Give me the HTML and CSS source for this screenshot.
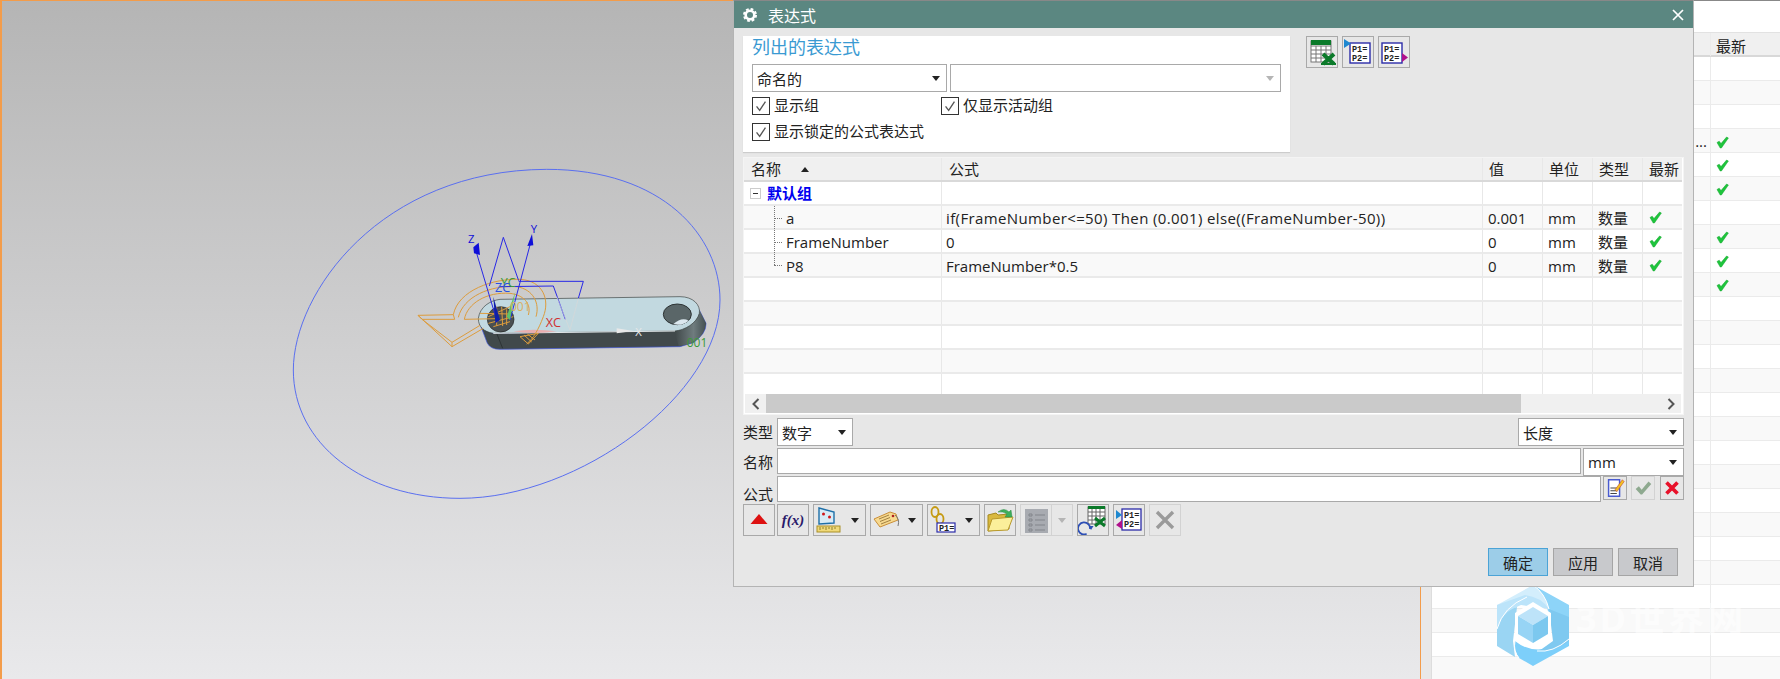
FILE: index.html
```html
<!DOCTYPE html>
<html lang="zh">
<head>
<meta charset="utf-8">
<title>表达式</title>
<link rel="stylesheet" href="styles.css">
</head>
<body>
<svg class="defs" width="0" height="0" aria-hidden="true">
  <symbol id="i-check" viewBox="0 0 13 13"><path d="M1 6.5 L3.2 5.2 L5 7.6 L10.6 1 L12.4 2 L5.4 12 L4.2 12 Z" fill="#1ec53c" stroke="#12a52c" stroke-width=".5"/></symbol>
  <symbol id="i-box" viewBox="0 0 18 18"><path d="M4 9.5 L7.5 14 L14 4" fill="none" stroke="#555" stroke-width="1.500"/></symbol>
  <symbol id="i-grid" viewBox="0 0 30 30">
    <rect x="4" y="4" width="20" height="21" fill="#fff" stroke="#777"/>
    <path d="M4 9H24M4 13H24M4 17H24M4 21H24M9 9V25M14 9V25M19 9V25" stroke="#777" fill="none"/>
    <rect x="4" y="3" width="20" height="5" fill="#0b7a2a"/>
    <path d="M16 17 L27 27 M27 17 L16 27" stroke="#0b7a2a" stroke-width="4"/>
    <path d="M14 27H29" stroke="#0b7a2a" stroke-width="2"/>
  </symbol>
  <symbol id="i-tbl2" viewBox="0 0 30 30">
    <rect x="10" y="2" width="17" height="17" fill="#fff" stroke="#666"/>
    <path d="M10 7H27M10 11H27M10 15H27M14 3V19M18 3V19M22 3V19" stroke="#666"/>
    <rect x="10" y="1" width="17" height="3" fill="#0b7a2a"/>
    <path d="M17 13 L27 21 M27 13 L17 21" stroke="#0b7a2a" stroke-width="3"/>
    <path d="M13 23 A6 6 0 1 0 9.600 27.800" fill="none" stroke="#2d4fb5" stroke-width="1.8" transform="translate(-1,1)"/>
    <path d="M11 21 L15.500 21 L13 25 Z" fill="#2d4fb5"/>
  </symbol>
</svg>

<main class="app">
  <section class="viewport">
    <svg class="model" viewBox="0 0 1380 1050" role="img" aria-label="三维模型">
      <defs>
        <linearGradient id="cap" x1="0" y1="0" x2="1" y2="0"><stop offset="0" stop-color="#3f4748"/><stop offset=".6" stop-color="#6f7c7e"/><stop offset="1" stop-color="#445052"/></linearGradient>
      </defs>
      <path d="M40 630 C40 400 300 30 800 28 C1150 28 1320 230 1320 420 C1320 700 900 1015 540 1015 C250 1015 40 850 40 630 Z" fill="none" stroke="#5a6ff0" stroke-width="3"/>
      <path d="M603 500 L622 550 Q632 568 660 568 L1200 560 L1240 548 Q1280 520 1278 490 L1258 450 L1180 510 L640 520 Z" fill="#41494b" stroke="#3f58e0" stroke-width="2"/>
      <path d="M1184 514 L1196 558 Q1270 550 1278 490 L1258 450 Q1240 500 1184 514 Z" fill="url(#cap)"/>
      <path d="M650 520 L668 565" stroke="#23282a" stroke-width="2"/>
      <path d="M595 475 C600 440 630 422 660 418 L1200 410 C1240 410 1262 435 1258 460 C1250 490 1215 510 1185 513 L640 520 C610 515 595 500 595 475 Z" fill="#c2d9e0" stroke="#39413f" stroke-width="2"/>
      <path d="M640 520 L1185 513" stroke="#e3e8ea" stroke-width="3"/>
      <ellipse cx="662" cy="478" rx="40" ry="38" fill="#4a5052" stroke="#222" stroke-width="2"/>
      <ellipse cx="1192" cy="463" rx="42" ry="31" fill="#5a6668" stroke="#2d3334" stroke-width="3"/>
      <path d="M1180 492 Q1205 470 1226 482 Q1205 500 1180 492 Z" fill="#dce8ef"/>
      <path d="M700 514 Q760 505 830 514 Q760 524 700 514 Z" fill="#f0a6a6" opacity=".85"/>
      <path d="M1010 505 L1060 513 L1010 520 Z" fill="#e8e8e8"/>
      <g fill="none" stroke="#dd9c3c" stroke-width="3">
        <path d="M414 466 L520 464 L524 478 L426 478 L414 466 M414 466 L516 560 L516 547 L426 478 M516 560 L610 505 M516 547 L600 496"/>
        <path d="M520 464 C535 390 640 355 720 358 C790 362 810 420 790 470 C775 510 760 535 740 552"/>
        <path d="M535 472 C550 410 630 375 710 380 C760 388 780 430 768 470"/>
        <path d="M553 478 C562 430 620 395 690 400 C730 405 755 430 745 465"/>
        <path d="M553 478 L650 476 M600 460 L690 462"/>
        <path d="M720 530 L775 520 L745 552 Z M732 525 L755 546 M742 522 L765 540"/>
        <path d="M625 470 L690 440 M625 490 L700 470 M640 500 L690 485 M650 440 L650 498 M665 440 L668 498 M680 448 L680 495"/>
      </g>
      <g fill="none" stroke="#2828e6" stroke-width="3">
        <path d="M590 280 L650 480 M750 255 L690 480"/>
        <path d="M628 378 L670 232 L716 362 M660 380 L820 378 L856 478 M716 364 L910 364 L895 415"/>
      </g>
      <path d="M895 415 L870 510 L830 410" fill="none" stroke="#d8d8d8" stroke-width="2"/>
      <path d="M580 262 L596 248 L600 285 L582 280 Z M742 258 L756 222 L760 256 Z" fill="#0f0fd8"/>
      <path d="M640 410 L660 480 L646 490 Z" fill="#0f1fa8"/>
      <path d="M706 395 L690 480 L680 470 Z" fill="#5cc26a"/>
      <text x="564" y="250" class="t-blue" font-size="34">Z</text>
      <text x="752" y="218" class="t-blue" font-size="34">Y</text>
      <text x="662" y="382" class="t-green" font-size="38">YC</text>
      <text x="645" y="396" class="t-blue2" font-size="38">ZC</text>
      <text x="690" y="452" class="t-orange" font-size="36">001</text>
      <text x="797" y="502" class="t-red" font-size="38">XC</text>
      <text x="1066" y="528" class="t-white" font-size="34">X</text>
      <text x="1220" y="562" class="t-green" font-size="36">001</text>
    </svg>
  </section>

  <aside class="side">
    <div class="side-top"></div>
    <div class="side-table">
      <div class="s-row s-head"><div></div><div class="s-cell">最新</div></div>
      <div class="s-row"><div></div><div></div></div>
      <div class="s-row"><div></div><div></div></div>
      <div class="s-row"><div></div><div></div></div>
      <div class="s-row"><div class="s-more">...</div><div class="s-cell"><svg class="chk"><use href="#i-check"/></svg></div></div>
      <div class="s-row"><div></div><div class="s-cell"><svg class="chk"><use href="#i-check"/></svg></div></div>
      <div class="s-row"><div></div><div class="s-cell"><svg class="chk"><use href="#i-check"/></svg></div></div>
      <div class="s-row"><div></div><div></div></div>
      <div class="s-row"><div></div><div class="s-cell"><svg class="chk"><use href="#i-check"/></svg></div></div>
      <div class="s-row"><div></div><div class="s-cell"><svg class="chk"><use href="#i-check"/></svg></div></div>
      <div class="s-row"><div></div><div class="s-cell"><svg class="chk"><use href="#i-check"/></svg></div></div>
      <div class="s-row"><div></div><div></div></div><div class="s-row"><div></div><div></div></div>
      <div class="s-row"><div></div><div></div></div><div class="s-row"><div></div><div></div></div>
      <div class="s-row"><div></div><div></div></div><div class="s-row"><div></div><div></div></div>
      <div class="s-row"><div></div><div></div></div><div class="s-row"><div></div><div></div></div>
      <div class="s-row"><div></div><div></div></div><div class="s-row"><div></div><div></div></div>
      <div class="s-row"><div></div><div></div></div><div class="s-row"><div></div><div></div></div>
      <div class="s-row"><div></div><div></div></div><div class="s-row"><div></div><div></div></div>
      <div class="s-row"><div></div><div></div></div><div class="s-row"><div></div><div></div></div>
      <div class="s-row"><div></div><div></div></div>
    </div>
  </aside>

  <div class="watermark">
    <svg class="wm-logo" viewBox="0 0 72 81" aria-hidden="true">
      <path d="M36 0 L72 20 L72 40 L52 30 Q48 10 36 0 Z" fill="#8dd4f8"/>
      <path d="M36 0 L0 20 L0 26 Q24 8 52 24 Q48 8 36 0 Z" fill="#d3eefc"/>
      <path d="M0 20 L28 10 Q44 12 52 24 L24 20 Q8 26 0 44 Z" fill="#bce4fa"/>
      <path d="M0 44 Q6 26 20 22 L16 56 L18 72 L0 61 Z" fill="#9ad5f3"/>
      <path d="M18 56 Q40 74 72 54 L72 61 L36 81 L22 73 Q16 64 18 56 Z" fill="#7dcffa"/>
      <path d="M52 24 L72 32 L72 56 Q60 66 42 66 L56 56 Z" fill="#7fc9f0"/>
      <path d="M36 17 L54 28 L54 51 L36 62 L18 51 L18 28 Z" fill="#fff"/>
      <path d="M36 22 L51 31 L36 40 L21 31 Z" fill="#bde3f9"/>
      <path d="M21 31 L36 40 L36 58 L21 49 Z" fill="#97d4f5"/>
      <path d="M51 31 L36 40 L36 58 L51 49 Z" fill="#7cc8ef"/>
      <path d="M0 44 Q6 22 30 12 M52 24 Q48 8 36 0 M72 54 Q56 68 40 66 M18 56 Q16 66 22 73" fill="none" stroke="#fff" stroke-width="1"/>
    </svg>
    <span class="wm-text">3D世界网</span>
  </div>

  <div class="dialog">
    <header class="d-title">
      <svg class="gear" viewBox="0 0 14 14" aria-hidden="true"><circle cx="7" cy="7" r="4.300" fill="none" stroke="#fff" stroke-width="2.600"/><circle cx="7" cy="7" r="6" fill="none" stroke="#fff" stroke-width="2" stroke-dasharray="2.700 2"/></svg>
      <span class="d-name">表达式</span>
      <svg class="close" viewBox="0 0 12 12" aria-hidden="true"><path d="M1 1 L11 11 M11 1 L1 11" stroke="#fff" stroke-width="1.700"/></svg>
    </header>

    <div class="d-body">
      <div class="top">
        <div class="panel">
          <h2 class="panel-h">列出的表达式</h2>
          <div class="panel-combos">
            <div class="combo combo-a"><span>命名的</span><i class="caret"></i></div>
            <div class="combo combo-b"><span></span><i class="caret caret-off"></i></div>
          </div>
          <div class="checks">
            <label class="chkline chk-first"><span class="cbx"><svg><use href="#i-box"/></svg></span>显示组</label>
            <label class="chkline"><span class="cbx"><svg><use href="#i-box"/></svg></span>仅显示活动组</label>
          </div>
          <div class="checks checks-2">
            <label class="chkline"><span class="cbx"><svg><use href="#i-box"/></svg></span>显示锁定的公式表达式</label>
          </div>
        </div>
        <div class="top-tools">
          <button class="ib"><svg class="ico"><use href="#i-grid"/></svg></button>
          <button class="ib"><svg class="ico" viewBox="0 0 30 30">
            <rect x="7" y="6" width="20" height="20" fill="#fff" stroke="#2c2ca8" stroke-width="1.400"/>
            <text x="9" y="14.500" class="pp">P1=</text><text x="9" y="23.500" class="pp">P2=</text>
            <path d="M1 2 L8 6.500 L1 11 Z" fill="#1e88d0"/>
          </svg></button>
          <button class="ib"><svg class="ico" viewBox="0 0 30 30">
            <rect x="3" y="6" width="20" height="20" fill="#fff" stroke="#2c2ca8" stroke-width="1.400"/>
            <text x="5" y="14.500" class="pp">P1=</text><text x="5" y="23.500" class="pp">P2=</text>
            <path d="M23 16 L29 20.500 L23 25 Z" fill="#b0108c"/>
          </svg></button>
        </div>
      </div>

      <div class="table">
        <div class="t-scroll">
          <div class="row head">
            <div class="c"><span>名称</span><i class="sort"></i></div>
            <div class="c">公式</div><div class="c c-v">值</div><div class="c c-v">单位</div><div class="c c-v">类型</div><div class="c c-v">最新</div>
          </div>
          <div class="row">
            <div class="c c-name"><span class="minus"></span><b class="group">默认组</b></div>
            <div class="c"></div><div class="c"></div><div class="c"></div><div class="c"></div><div class="c"></div>
          </div>
          <div class="row alt data">
            <div class="c c-name"><span class="guide"></span><span class="nm">a</span></div>
            <div class="c c-long">if(FrameNumber&lt;=50) Then (0.001) else((FrameNumber-50))</div>
            <div class="c c-num">0.001</div><div class="c c-num">mm</div><div class="c c-num">数量</div><div class="c c-chk"><svg class="chk"><use href="#i-check"/></svg></div>
          </div>
          <div class="row data">
            <div class="c c-name"><span class="guide"></span><span class="nm">FrameNumber</span></div>
            <div class="c">0</div>
            <div class="c c-num">0</div><div class="c c-num">mm</div><div class="c c-num">数量</div><div class="c c-chk"><svg class="chk"><use href="#i-check"/></svg></div>
          </div>
          <div class="row alt data">
            <div class="c c-name"><span class="guide guide-last"></span><span class="nm">P8</span></div>
            <div class="c">FrameNumber*0.5</div>
            <div class="c c-num">0</div><div class="c c-num">mm</div><div class="c c-num">数量</div><div class="c c-chk"><svg class="chk"><use href="#i-check"/></svg></div>
          </div>
          <div class="row"><div class="c"></div><div class="c"></div><div class="c"></div><div class="c"></div><div class="c"></div><div class="c"></div></div>
          <div class="row alt"><div class="c"></div><div class="c"></div><div class="c"></div><div class="c"></div><div class="c"></div><div class="c"></div></div>
          <div class="row"><div class="c"></div><div class="c"></div><div class="c"></div><div class="c"></div><div class="c"></div><div class="c"></div></div>
          <div class="row alt"><div class="c"></div><div class="c"></div><div class="c"></div><div class="c"></div><div class="c"></div><div class="c"></div></div>
          <div class="row"><div class="c"></div><div class="c"></div><div class="c"></div><div class="c"></div><div class="c"></div><div class="c"></div></div>
        </div>
        <div class="hbar">
          <span class="hb-btn"><svg viewBox="0 0 8 12"><path d="M6.500 1 L1.500 6 L6.500 11" fill="none" stroke="#555" stroke-width="2"/></svg></span>
          <span class="hb-thumb"></span>
          <span class="hb-btn hb-end"><svg viewBox="0 0 8 12"><path d="M1.500 1 L6.500 6 L1.500 11" fill="none" stroke="#555" stroke-width="2"/></svg></span>
        </div>
      </div>

      <div class="form">
        <div class="f-row f-r1">
          <span class="f-label">类型</span>
          <div class="combo combo-type"><span>数字</span><i class="caret"></i></div>
          <div class="combo combo-kind"><span>长度</span><i class="caret"></i></div>
        </div>
        <div class="f-row f-r2">
          <span class="f-label">名称</span>
          <div class="input input-grow"></div>
          <div class="combo combo-unit"><span>mm</span><i class="caret"></i></div>
        </div>
        <div class="f-row f-r3">
          <span class="f-label f-low">公式</span>
          <div class="input input-grow input-f"></div>
          <button class="ib ib-s"><svg viewBox="0 0 24 24" class="ico-s"><path d="M5 3H17V21H5Z" fill="#fff" stroke="#4a5bd0" stroke-width="1.600"/><path d="M7 12H14M7 15H14M7 18H14" stroke="#333"/><path d="M12 14 L20 3 L22 5 L14 16 Z" fill="#f3c21f" stroke="#c0392b" stroke-width=".6"/></svg></button>
          <button class="ib ib-s ib-off"><svg viewBox="0 0 24 24" class="ico-s"><path d="M4 13 L7.500 10 L10.500 14 L18 5 L21 7.500 L11 19 L9.500 19 Z" fill="#8ea98f"/></svg></button>
          <button class="ib ib-s"><svg viewBox="0 0 24 24" class="ico-s"><path d="M6 6 L18 18 M18 6 L6 18" stroke="#e8112a" stroke-width="4"/></svg></button>
        </div>
      </div>

      <div class="toolbar">
        <button class="ib"><svg class="ico" viewBox="0 0 30 30"><path d="M15 9 L23.500 19 L6.500 19 Z" fill="#dd1111"/></svg></button>
        <button class="ib"><span class="fx">f(x)</span></button>
        <button class="ib ib-split"><svg class="ico" viewBox="0 0 30 30">
          <path d="M5 3 L20 7 L20 18 L5 19 Z" fill="#d8ecf6" stroke="#1e6fa8" stroke-width="1.400"/><circle cx="9.500" cy="9" r="1.500" fill="#d01818"/><circle cx="15.500" cy="12" r="1.500" fill="#d01818"/>
          <rect x="3" y="21" width="23" height="6" fill="#f0d978" stroke="#a98f28"/><path d="M6 22V25M9 22V24M12 22V25M15 22V24M18 22V25M21 22V24" stroke="#7a6a20" stroke-width=".8"/>
        </svg><i class="caret"></i></button>
        <button class="ib ib-split"><svg class="ico" viewBox="0 0 30 30">
          <path d="M3 14 L19 7 L25 9 L27 15 L9 22 Z" fill="#f7d98f" stroke="#c98f3a"/><path d="M8 14 L18 10 M9 16.500 L19 12.500 M10 19 L20 15" stroke="#8a6a30" stroke-width=".8"/><circle cx="22" cy="11" r="1.300" fill="#b02020"/><path d="M24 10 Q29 14 27 21" fill="none" stroke="#777"/>
        </svg><i class="caret"></i></button>
        <button class="ib ib-split"><svg class="ico" viewBox="0 0 30 30">
          <ellipse cx="7" cy="7" rx="3.500" ry="5" fill="none" stroke="#c59a12" stroke-width="1.800"/><ellipse cx="12" cy="14" rx="3.500" ry="5" fill="none" stroke="#c59a12" stroke-width="1.800"/>
          <rect x="9" y="18" width="18" height="9" fill="#fff" stroke="#2c2ca8" stroke-width="1.200"/><text x="11" y="25.500" class="pp">P1=</text>
        </svg><i class="caret"></i></button>
        <button class="ib"><svg class="ico" viewBox="0 0 30 30">
          <path d="M3 10 L11 8 L13 10 L24 9 L24 24 L3 26 Z" fill="#d9b93e" stroke="#a68a1e"/><path d="M7 14 L28 12 L23 25 L3 26 Z" fill="#fbef9a" stroke="#b99a2c"/>
          <path d="M13 7 Q19 2 24 7 L26 5 L27 12 L20 12 L22 9 Q18 6 13 7 Z" fill="#3fae5a" stroke="#2a8a44" stroke-width=".5"/>
        </svg></button>
        <button class="ib ib-split ib-off ib-sep"><svg class="ico" viewBox="0 0 30 30">
          <rect x="4" y="4" width="23" height="24" fill="#a8abb1"/><path d="M8 9H11V11H8ZM8 14H11V16H8ZM8 19H11V21H8ZM8 24H11V26H8Z" fill="none" stroke="#82858b"/><path d="M14 10H24M14 15H24M14 20H24M14 25H24" stroke="#82858b"/>
        </svg><i class="caret caret-off"></i></button>
        <button class="ib"><svg class="ico"><use href="#i-tbl2"/></svg></button>
        <button class="ib"><svg class="ico" viewBox="0 0 30 30">
          <rect x="8" y="4" width="19" height="21" fill="#fff" stroke="#2c2ca8" stroke-width="1.300"/><text x="10" y="13" class="pp">P1=</text><text x="10" y="22" class="pp">P2=</text>
          <path d="M2 5 L8 10 L2 14 Z" fill="#1e88d0"/><path d="M8 15 L2 20 L8 24 Z" fill="#b0108c"/>
        </svg></button>
        <button class="ib ib-off"><svg class="ico" viewBox="0 0 30 30"><path d="M7 7 L23 23 M23 7 L7 23" stroke="#9a9a9a" stroke-width="3.400"/></svg></button>
      </div>

      <div class="footer">
        <button class="btn btn-ok">确定</button>
        <button class="btn">应用</button>
        <button class="btn">取消</button>
      </div>
    </div>
  </div>
</main>
</body>
</html>
```
FILE: styles.css
```css
* { box-sizing: border-box; }
html, body { margin: 0; padding: 0; height: 100%; overflow: hidden; }
body { font-family: "Open Sans", "Noto Sans CJK SC", sans-serif; font-size: 15px; color: #222; background: #fff; }
.defs { position: absolute; }
button { font: inherit; color: inherit; padding: 0; }

.app { position: relative; display: flex; width: 1780px; height: 679px; }

/* 3D viewport */
.viewport {
  position: relative; flex: 0 0 1420px; height: 679px;
  border-left: 2px solid #f39c4a; border-top: 1px solid #f39c4a;
  background: linear-gradient(#b5b5b5, #e9e9eb);
}
.model { position: absolute; left: 278px; top: 159px; width: 460px; height: 350px; }
.t-blue { fill: #1010d8; font-family: "Open Sans", sans-serif; }
.t-blue2 { fill: #2a50e0; font-family: "Open Sans", sans-serif; }
.t-green { fill: #3a9a3a; font-family: "Open Sans", sans-serif; }
.t-orange { fill: #d9b060; font-family: "Open Sans", sans-serif; }
.t-red { fill: #d03030; font-family: "Open Sans", sans-serif; }
.t-white { fill: #e8e8e8; font-family: "Open Sans", sans-serif; }

/* Background table on the right */
.side { flex: 1; display: flex; flex-direction: column; border-left: 1px solid #f39c4a; background: #e8e8e8; padding-left: 10px; border-top: 1px solid #888; overflow: hidden; }
.side-top { height: 32px; flex: none; background: #fff; border-bottom: 1px solid #e2e2e2; }
.side-table { background: #fff; border-left: 1px solid #ddd; }
.s-row { display: grid; grid-template-columns: 278px 1fr; height: 24px; border-bottom: 1px solid #ebebeb; }
.s-row > div + div { border-left: 1px solid #ebebeb; }
.s-row:nth-child(odd) { background: #f9f9f9; }
.s-row.s-head { height: 24px; background: #f0f0f0; border-bottom: 2px solid #d8d8d8; }
.s-cell { display: flex; align-items: center; padding: 2px 0 0 5px; }
.s-more { text-align: right; padding-right: 3px; line-height: 24px; }
.chk { width: 13px; height: 13px; display: block; }

/* Watermark */
.watermark { position: absolute; left: 1497px; top: 585px; display: flex; align-items: flex-start; gap: 7px; }
.wm-logo { width: 72px; height: 81px; flex: none; }
.wm-text { margin-top: 16px; font-family: "Open Sans", "Noto Sans CJK SC", sans-serif; font-weight: 700; font-size: 36px; line-height: 36px; letter-spacing: 3px; color: rgba(255,255,255,.55); white-space: nowrap; }

/* Dialog */
.dialog {
  position: absolute; left: 733px; top: 0; width: 961px; height: 587px;
  background: #e7e7e7; border: 1px solid #b4b4b4; border-top: 1px solid #888;
  display: flex; flex-direction: column;
}
.d-title { flex: none; height: 27px; background: #5b8781; color: #fff; display: flex; align-items: center; padding: 0 10px 0 9px; }
.gear { width: 14px; height: 14px; flex: none; }
.d-name { margin-left: 11px; font-size: 16px; flex: 1; }
.close { width: 12px; height: 12px; margin-right: -1px; }

.d-body { flex: 1; display: flex; flex-direction: column; padding: 8px 9px 0 9px; min-height: 0; }
.top { display: flex; flex: none; }
.panel { width: 547px; height: 116px; background: #fff; padding: 0 9px 0 9px; box-shadow: 0 1px 1px #ccc; }
.panel-h { margin: 0; height: 28px; font-size: 18px; line-height: 22px; font-weight: 400; color: #3a9ad2; }
.panel-combos { display: flex; gap: 3px; }
.combo { height: 28px; background: #fff; border: 1px solid #a9a9a9; display: flex; align-items: center; justify-content: space-between; padding: 0 6px 0 4px; flex: none; }
.combo-a { width: 195px; }
.combo-b { width: 331px; }
.caret { width: 0; height: 0; border-left: 4.500px solid transparent; border-right: 4.500px solid transparent; border-top: 5px solid #222; flex: none; }
.caret-off { border-top-color: #b5b5b5; }
.checks { display: flex; margin-top: 5px; }
.checks-2 { margin-top: 8px; }
.chkline { display: flex; align-items: flex-start; gap: 4px; height: 18px; line-height: 16px; white-space: nowrap; }
.chk-first { width: 189px; }
.cbx { width: 18px; height: 18px; border: 1px solid #333; background: #fff; display: block; flex: none; }
.cbx svg { width: 16px; height: 16px; display: block; }
.top-tools { display: flex; gap: 4px; margin-left: 16px; align-items: flex-start; }

.ib { width: 32px; height: 32px; background: transparent; border: 1px solid #a9a9a9; display: flex; align-items: center; justify-content: center; flex: none; }
.ico { width: 30px; height: 30px; display: block; flex: none; }
.pp { font-family: "Liberation Mono", monospace; font-size: 8.500px; font-weight: 700; fill: #222; }
.ib-off { border-color: #d2d2d2; }
.ib-split { width: 53px; justify-content: flex-start; }
.ib-split .caret { margin-left: 7px; }
.ib-sep .ico { border-right: 1px solid #d2d2d2; width: 31px; }
.ib-sep .caret { margin-left: 6px; }
.fx { font-family: "Liberation Serif", serif; font-style: italic; font-weight: 700; font-size: 15px; color: #2a1a6a; }

/* Expression table */
.table { flex: none; margin-top: 5px; height: 258px; background: #fff; border: 1px solid #f4f4f4; padding-right: 1px; display: flex; flex-direction: column; }
.t-scroll { height: 236px; overflow: hidden; flex: none; }
.row { display: grid; grid-template-columns: 198px 541px 60px 50px 50px 1fr; height: 24px; background: #fff; border-bottom: 2px solid #eaeaea; }
.row.alt { background: #f9f9f9; }
.row.head { background: #f0f0f0; border-bottom-color: #d9d9d9; }
.c { display: flex; align-items: center; padding-left: 4px; border-right: 1px solid #e8e8e8; white-space: nowrap; line-height: 22px; min-width: 0; }
.c:last-child { border-right: 0; }
.head .c { padding-left: 7px; }
.head .c-v { padding-left: 6px; }
.head .c:first-child { padding-left: 7px; }
.sort { width: 0; height: 0; margin-left: 20px; border-left: 4.500px solid transparent; border-right: 4.500px solid transparent; border-bottom: 5px solid #222; }
.data .c { padding-top: 1px; }
.data .c-name { padding-top: 0; }
.data .c-name .nm { margin-top: 1px; }
.data .c-chk { padding-top: 0; padding-left: 6px; }
.c-num { padding-left: 5px; }
.c-long { letter-spacing: .38px; }
.c-name { padding-left: 6px; }
.minus { width: 11px; height: 11px; border: 1px solid #ccc; background: #fff; position: relative; flex: none; }
.minus::after { content: ""; position: absolute; left: 2px; right: 2px; top: 4px; height: 1px; background: #333; }
.group { margin-left: 6px; color: #0000f0; font-weight: 700; }
.guide { align-self: stretch; width: 8px; margin-left: 24px; margin-bottom: -2px; border-left: 1px dotted #777; display: flex; align-items: center; flex: none; }
.guide::before { content: ""; width: 8px; border-top: 1px dotted #777; }
.guide-last { border-left: 0; align-self: flex-start; height: 50%; margin-top: 0; align-items: flex-end; background: repeating-linear-gradient(#777 0 1px, transparent 1px 2px) left / 1px 100% no-repeat; }
.nm { margin-left: 4px; }
.c-chk { padding-left: 6px; }

.hbar { display: flex; height: 19px; background: #f0f0f0; margin: 0 1px 0 1px; flex: none; }
.hb-btn { width: 21px; display: flex; align-items: center; justify-content: center; flex: none; }
.hb-btn svg { width: 8px; height: 12px; }
.hb-thumb { width: 755px; background: #cacaca; flex: none; }
.hb-end { margin-left: auto; }

/* Form rows */
.form { flex: none; margin-top: 3px; }
.f-row { display: flex; align-items: flex-start; }
.f-r1 { height: 30px; }
.f-r2 { height: 28px; }
.f-r3 { height: 28px; }
.f-label { width: 34px; flex: none; line-height: 28px; }
.f-low { align-self: flex-end; line-height: 20px; margin-bottom: 0; }
.combo-type { width: 76px; }
.combo-kind { width: 166px; margin-left: auto; }
.combo-unit { width: 101px; margin-left: 2px; }
.input { height: 26px; background: #fff; border: 1px solid #a9a9a9; }
.input-grow { flex: 1; }
.input-f { margin-right: 2px; }
.ib-s { width: 24px; height: 24px; }
.ib-s + .ib-s { margin-left: 4px; }
.ib-s + .ib-s + .ib-s { margin-left: 5px; }
.ico-s { width: 22px; height: 22px; display: block; }

/* Toolbar */
.toolbar { flex: none; display: flex; gap: 4px; margin-top: 0; }
.toolbar .ib:nth-child(1) { margin-right: -2px; }

/* Footer */
.footer { flex: none; display: flex; justify-content: flex-end; gap: 5px; margin-top: 12px; padding-right: 6px; }
.btn { width: 60px; height: 28px; background: #c8c9cc; border: 1px solid #a5a5a5; }
.btn-ok { background: #9ccde8; border-color: #4ba3d6; }
```
